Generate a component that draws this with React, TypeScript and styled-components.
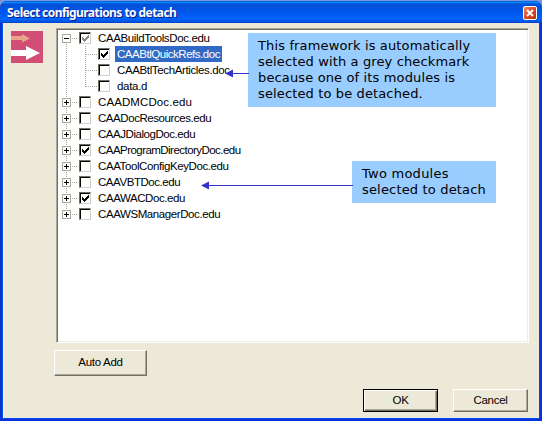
import React from "react";
import styled, { createGlobalStyle, css } from "styled-components";

const Global = createGlobalStyle`
  * { box-sizing: border-box; }
  body { margin: 0; background: #fff; overflow: hidden; font-family: "Liberation Sans", Arial, sans-serif; }
`;

const Backdrop = styled.div`
  width: 542px;
  height: 421px;
  padding-top: 1px;
  background: linear-gradient(#7b96dd 0 8px, #fff 8px);
`;

const Dialog = styled.div`
  display: flex;
  flex-direction: column;
  width: 542px;
  height: 420px;
  border-radius: 7px 7px 0 0;
  overflow: hidden;
  background: #0831d9;
`;

const TitleBar = styled.header`
  display: flex;
  flex: 0 0 22px;
  align-items: center;
  justify-content: space-between;
  padding: 1px 5px 0 7px;
  background: linear-gradient(#0038c0 0, #0997ff 1px, #0350d8 3px, #0053e3 8px, #0058ee 12px, #0065fd 18px, #0052e0 21px, #0038bd 22px);
`;

const Title = styled.h1`
  margin: 0;
  color: #fff;
  font: bold 12px/20px "Noto Sans", sans-serif;
  letter-spacing: -0.56px;
  white-space: nowrap;
  text-shadow: 1px 1px 0 #0a1883;
`;

const CloseButton = styled.button`
  display: block;
  width: 14px;
  height: 14px;
  padding: 0;
  border: 1px solid #fff;
  border-radius: 2px;
  background: linear-gradient(135deg, #ec8a6c, #dc4a24 50%, #b92f0d);
  svg { display: block; }
`;

const Client = styled.main`
  display: flex;
  flex-direction: column;
  flex: 1;
  margin: 0 3px 3px;
  border-left: 1px solid #f6f4ec;
  background: #ece9d8;
  box-shadow: -1px 0 0 #0855dd, 0 1px 0 #0048f1, 1px 0 0 #0048f1;
`;

const Upper = styled.div`
  display: flex;
  gap: 13px;
  padding: 5px 0 0 7px;
`;

const Emblem = styled.svg`
  display: block;
  margin-top: 3px;
`;

const TreePane = styled.div`
  position: relative;
  width: 473px;
  height: 315px;
  border: 1px solid;
  border-color: #aca899 #fff #fff #aca899;
  background: #fff;
  box-shadow: inset 1px 1px 0 #716f64, inset -1px -1px 0 #f1efe2;
`;

const TreeList = styled.ul`
  margin: 0;
  padding: 1px 0 0 5px;
  list-style: none;
`;

const Row = styled.li`
  display: flex;
  height: 16px;
`;

const Guide = styled.svg`
  display: block;
  flex: none;
`;

const CheckBox = styled.span`
  display: block;
  flex: none;
  width: 12px;
  height: 12px;
  margin-top: 2px;
  border: 1px solid;
  border-color: #716f64 #d4d0c8 #d4d0c8 #716f64;
  box-shadow: inset 1px 1px 0 #000;
  svg { display: block; }
`;

const Label = styled.span<{ $selected?: boolean; $spacing: number }>`
  height: 16px;
  margin-left: 5px;
  padding: 0 2px;
  font-size: 11.5px;
  line-height: 16px;
  letter-spacing: ${(p) => p.$spacing}px;
  white-space: nowrap;
  color: #000;
  ${(p) => p.$selected && css`background: #316ac5; color: #fff;`}
`;

const Callout = styled.aside<{ $x: number; $y: number; $w: number; $h: number }>`
  position: absolute;
  left: ${(p) => p.$x}px;
  top: ${(p) => p.$y}px;
  width: ${(p) => p.$w}px;
  height: ${(p) => p.$h}px;
  padding: 5px 0 0 10px;
  background: #99ccff;
  color: #000;
  font: 13px/16px "DejaVu Sans", Verdana, sans-serif;
`;

const Line = styled.div<{ $spacing: number }>`
  letter-spacing: ${(p) => p.$spacing}px;
  white-space: nowrap;
`;

const Arrow = styled.svg<{ $x: number; $y: number }>`
  position: absolute;
  left: ${(p) => p.$x}px;
  top: ${(p) => p.$y}px;
`;

const Button = styled.button<{ $w: number; $h: number; $primary?: boolean }>`
  width: ${(p) => p.$w}px;
  height: ${(p) => p.$h}px;
  padding: 0 0 2px;
  border: 1px solid;
  border-color: ${(p) => (p.$primary ? "#000" : "#fff #716f64 #716f64 #fff")};
  background: #ece9d8;
  color: #000;
  font: 11.5px/14px "Liberation Sans", Arial, sans-serif;
  letter-spacing: -0.3px;
  box-shadow: ${(p) =>
    p.$primary
      ? "inset 1px 1px 0 #fff, inset -1px -1px 0 #716f64, inset -2px -2px 0 #aca899"
      : "inset -1px -1px 0 #aca899"};
`;

const AddBar = styled.div`
  padding: 7px 0 0 50px;
  height: 33px;
`;

const Actions = styled.footer`
  display: flex;
  gap: 15px;
  margin-top: 13px;
  padding-left: 359px;
`;

type Check = "none" | "on" | "grey";
type Item = { name: string; check: Check; spacing: number; child?: boolean; last?: boolean; open?: boolean; selected?: boolean };

const items: Item[] = [
  { name: "CAABuildToolsDoc.edu", check: "grey", spacing: -0.37, open: true },
  { name: "CAABtlQuickRefs.doc", check: "on", spacing: -0.47, child: true, selected: true },
  { name: "CAABtlTechArticles.doc", check: "none", spacing: -0.37, child: true },
  { name: "data.d", check: "none", spacing: -0.3, child: true, last: true },
  { name: "CAADMCDoc.edu", check: "none", spacing: 0.1 },
  { name: "CAADocResources.edu", check: "none", spacing: -0.44 },
  { name: "CAAJDialogDoc.edu", check: "none", spacing: -0.45 },
  { name: "CAAProgramDirectoryDoc.edu", check: "on", spacing: -0.54 },
  { name: "CAAToolConfigKeyDoc.edu", check: "none", spacing: -0.4 },
  { name: "CAAVBTDoc.edu", check: "none", spacing: -0.45 },
  { name: "CAAWACDoc.edu", check: "on", spacing: -0.42 },
  { name: "CAAWSManagerDoc.edu", check: "none", spacing: -0.41 },
];

function TreeGuide({ item, first, final }: { item: Item; first: boolean; final: boolean }) {
  const dots = { stroke: "#aca899", strokeDasharray: "1 1", fill: "none" };
  return (
    <Guide width={item.child ? 36 : 17} height="16" shapeRendering="crispEdges">
      <path {...dots} d={`M4.5 ${first ? 8 : 0}V${final ? 8 : 16}`} />
      {item.child ? (
        <>
          <path {...dots} d={`M23.5 0V${item.last ? 9 : 16}`} />
          <path {...dots} d="M24 8.5H35" />
        </>
      ) : (
        <>
          <path {...dots} d="M10 8.5H16" />
          <rect x="0.5" y="4.5" width="8" height="8" fill="#fff" stroke="#aca899" />
          <path d={item.open ? "M2 8.5H7" : "M2 8.5H7M4.5 6V11"} stroke="#000" />
        </>
      )}
    </Guide>
  );
}

function CheckMark({ color }: { color: string }) {
  return (
    <svg width="10" height="10" shapeRendering="crispEdges">
      <path fill={color} d="M2 4h1v1h1v1h1v-1h1v-1h1v-1h1v-1h1v3h-1v1h-1v1h-1v1h-1v1h-1v-1h-1v-1h-1z" />
    </svg>
  );
}

export default function App() {
  return (
    <>
      <Global />
      <Backdrop>
        <Dialog>
          <TitleBar>
            <Title>Select configurations to detach</Title>
            <CloseButton aria-label="Close">
              <svg width="12" height="12" viewBox="0 0 12 12">
                <path d="M3 3l6 6M9 3l-6 6" stroke="#fff" strokeWidth="1.9" />
              </svg>
            </CloseButton>
          </TitleBar>
          <Client>
            <Upper>
              <Emblem width="32" height="32" viewBox="0 0 32 32">
                <defs>
                  <pattern id="weave" width="4" height="4" patternUnits="userSpaceOnUse">
                    <rect width="4" height="4" fill="#d04c74" />
                    <path fill="#b0607c" d="M0 0h1v1H0zM2 2h1v1H2z" />
                    <path fill="#e45360" d="M2 0h1v1H2zM0 2h1v1H0z" />
                  </pattern>
                </defs>
                <rect width="32" height="32" fill="url(#weave)" />
                <path fill="#e9a58c" d="M0 5h11V3l8 4.5-8 4V9H0z" />
                <path fill="#fff" d="M0 19h15v-4l14 7-14 7v-4H0z" />
              </Emblem>
              <TreePane>
                <TreeList>
                  {items.map((item, i) => (
                    <Row key={item.name}>
                      <TreeGuide item={item} first={i === 0} final={i === items.length - 1} />
                      <CheckBox>
                        {item.check !== "none" && <CheckMark color={item.check === "on" ? "#000" : "#8c8a80"} />}
                      </CheckBox>
                      <Label $selected={item.selected} $spacing={item.spacing}>{item.name}</Label>
                    </Row>
                  ))}
                </TreeList>
                <Callout $x={191} $y={4} $w={248} $h={74}>
                  <Line $spacing={0.14}>This framework is automatically</Line>
                  <Line $spacing={0.13}>selected with a grey checkmark</Line>
                  <Line $spacing={0.14}>because one of its modules is</Line>
                  <Line $spacing={0.13}>selected to be detached.</Line>
                </Callout>
                <Callout $x={295} $y={132} $w={144} $h={42}>
                  <Line $spacing={0.25}>Two modules</Line>
                  <Line $spacing={0.17}>selected to detach</Line>
                </Callout>
                <Arrow $x={168} $y={40} width="24" height="9">
                  <path d="M0 4.5L8 0.5V8.5Z" fill="#3333cc" />
                  <path d="M7 4.5H24" stroke="#3333cc" />
                </Arrow>
                <Arrow $x={144} $y={152} width="152" height="9">
                  <path d="M0 4.5L8 0.5V8.5Z" fill="#3333cc" />
                  <path d="M7 4.5H152" stroke="#3333cc" />
                </Arrow>
              </TreePane>
            </Upper>
            <AddBar>
              <Button $w={93} $h={26}>Auto Add</Button>
            </AddBar>
            <Actions>
              <Button $w={75} $h={23} $primary>OK</Button>
              <Button $w={75} $h={23}>Cancel</Button>
            </Actions>
          </Client>
        </Dialog>
      </Backdrop>
    </>
  );
}
